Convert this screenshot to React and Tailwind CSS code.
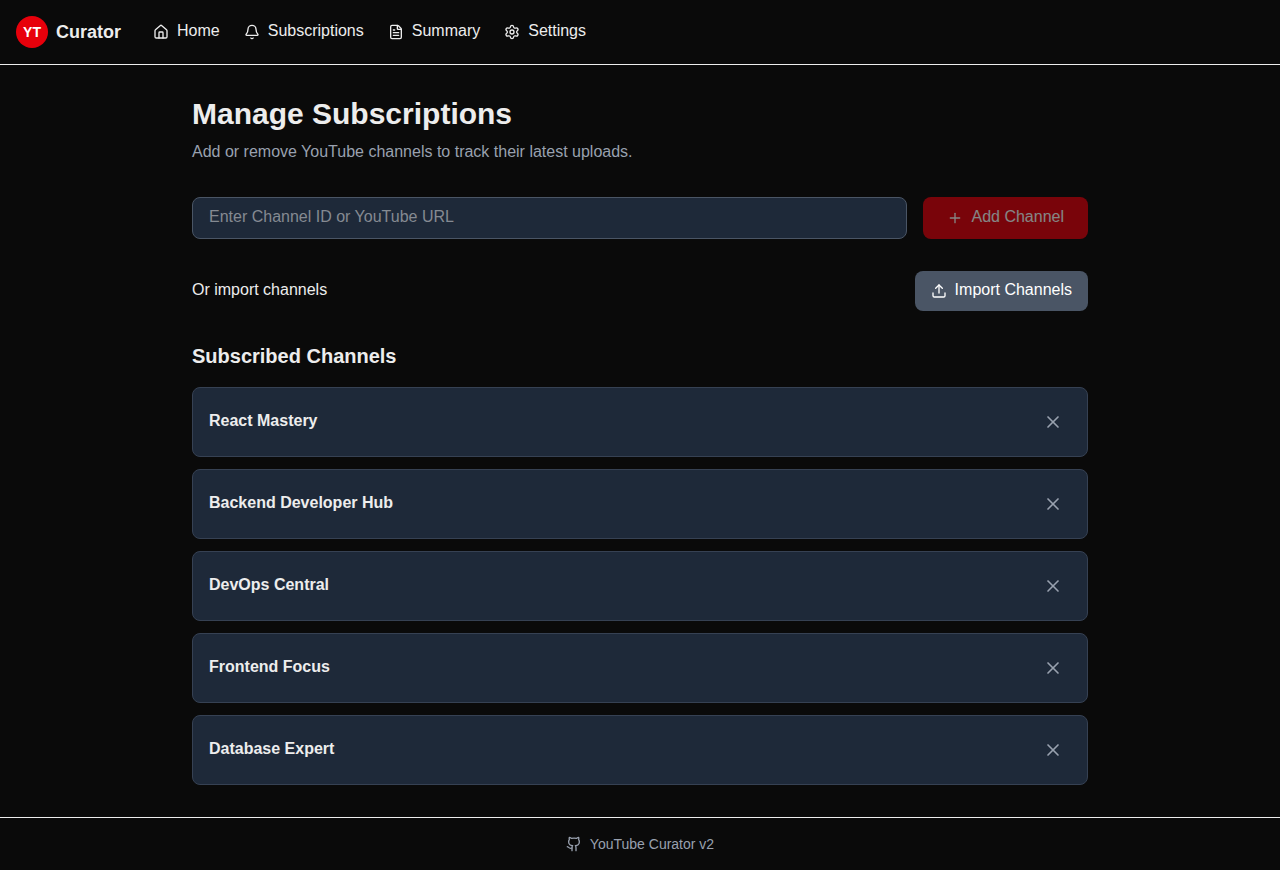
import { House, Bell, FileText, Settings, Plus, Upload, X, Github } from 'lucide-react';

const links = [
  { label: 'Home', Icon: House },
  { label: 'Subscriptions', Icon: Bell },
  { label: 'Summary', Icon: FileText },
  { label: 'Settings', Icon: Settings },
];

const channels = [
  'React Mastery',
  'Backend Developer Hub',
  'DevOps Central',
  'Frontend Focus',
  'Database Expert',
];

function Header() {
  return (
    <header className="flex h-[65px] items-center gap-8 border-b border-[#ededed] px-4">
      <div className="flex items-center gap-2">
        <div className="flex size-8 items-center justify-center rounded-full bg-[#e7000b] text-sm font-bold text-white">
          YT
        </div>
        <span className="text-lg font-bold">Curator</span>
      </div>
      <nav className="flex items-center gap-6">
        {links.map(({ label, Icon }) => (
          <a key={label} href="#" className="flex items-center gap-2">
            <Icon size={16} />
            <span className="-mt-0.5">{label}</span>
          </a>
        ))}
      </nav>
    </header>
  );
}

function ChannelRow({ name }) {
  return (
    <li className="flex h-[70px] items-center justify-between rounded-lg border border-[#364153] bg-[#1e2939] p-4">
      <h3 className="-mt-0.5 font-semibold">{name}</h3>
      <button aria-label={`Remove ${name}`} className="p-2 text-[#99a1af]">
        <X size={20} />
      </button>
    </li>
  );
}

export default function App() {
  return (
    <div className="flex min-h-screen flex-col bg-[#0a0a0a] font-['Liberation_Sans',Arial,sans-serif] text-[#ededed]">
      <Header />
      <main className="mx-auto w-full max-w-4xl flex-1 pt-[31px] pb-8">
        <h1 className="text-3xl leading-9 font-bold">Manage Subscriptions</h1>
        <p className="mt-2 text-[#99a1af]">
          Add or remove YouTube channels to track their latest uploads.
        </p>
        <form className="mt-[33px] flex gap-4">
          <input
            type="text"
            placeholder="Enter Channel ID or YouTube URL"
            className="h-[42px] flex-1 rounded-lg border border-[#4a5565] bg-[#1e2939] px-4 pb-0.5 placeholder:text-[#858a92]"
          />
          <button
            type="button"
            disabled
            className="flex h-[42px] items-center gap-2 rounded-lg bg-[#e7000b] px-6 text-white opacity-50"
          >
            <Plus size={16} />
            <span className="-mt-0.5">Add Channel</span>
          </button>
        </form>
        <div className="mt-8 flex items-center justify-between">
          <span className="-mt-0.5">Or import channels</span>
          <button className="flex h-10 items-center gap-2 rounded-lg bg-[#4a5565] px-4 text-white">
            <Upload size={16} />
            <span className="-mt-0.5">Import Channels</span>
          </button>
        </div>
        <h2 className="mt-[31px] text-xl font-semibold">Subscribed Channels</h2>
        <ul className="mt-[17px] space-y-3">
          {channels.map((name) => (
            <ChannelRow key={name} name={name} />
          ))}
        </ul>
      </main>
      <footer className="flex h-[53px] items-center justify-center gap-2 border-t border-[#ededed] text-sm text-[#99a1af]">
        <Github size={16} />
        <span>YouTube Curator v2</span>
      </footer>
    </div>
  );
}
